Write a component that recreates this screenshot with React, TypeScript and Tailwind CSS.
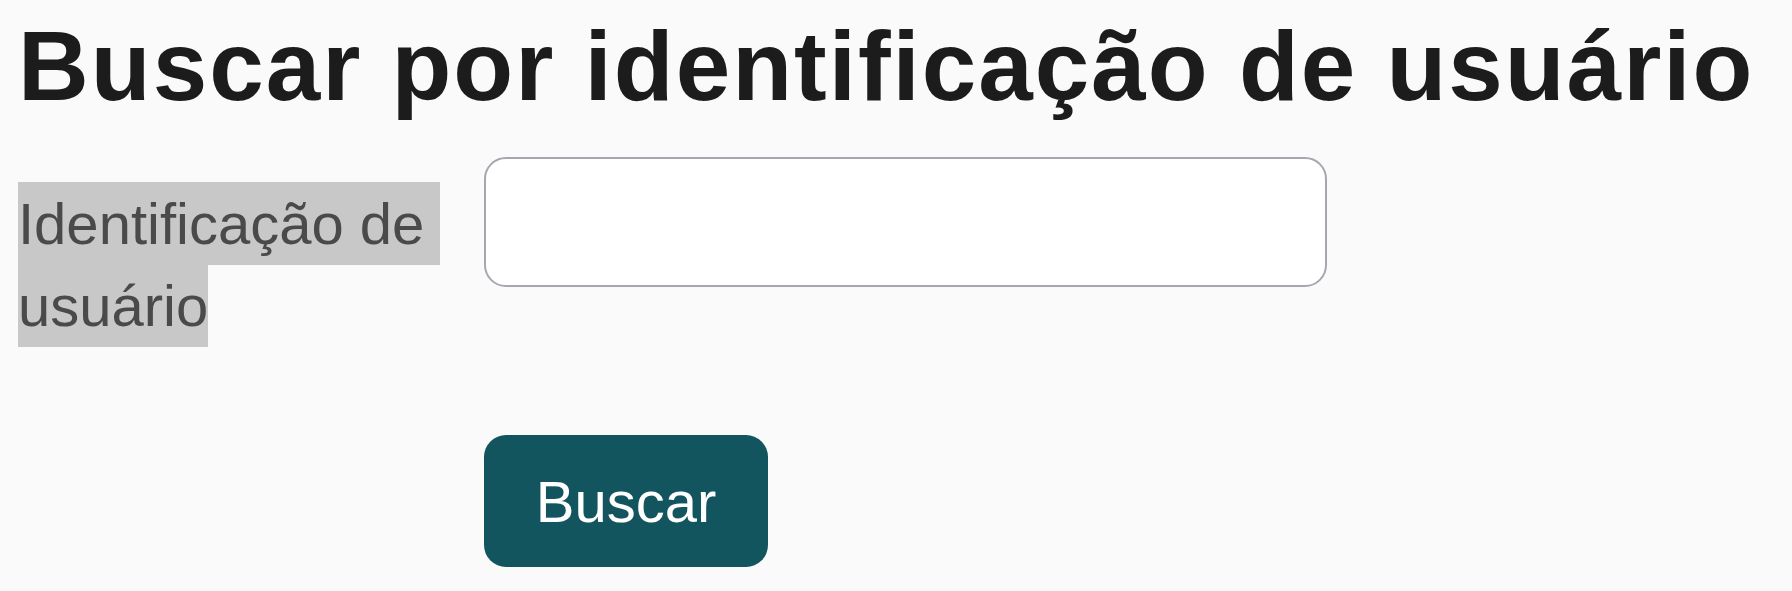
export default function App() {
  return (
    <div
      className="min-h-screen w-full bg-[#fafafa] pl-[18px] pt-[17px]"
      style={{ fontFamily: '"Liberation Sans", Arial, sans-serif' }}
    >
      <h1 className="text-[98px] leading-[98px] font-bold tracking-[2px] text-[#1c1c1c] whitespace-nowrap">
        Buscar por identificação de usuário
      </h1>

      <div className="mt-[42px] flex items-start">
        <label htmlFor="userId" className="mt-[26px] w-[466px] shrink-0 pr-[20px] text-[58px] leading-[82px] text-[#4a4a4a]">
          <span className="bg-[#c8c8c8] py-[9px] pr-[16px]">Identificação de</span>{" "}
          <span className="bg-[#c8c8c8] py-[9px]">usuário</span>
        </label>
        <input
          id="userId"
          type="text"
          className="h-[130px] w-[843px] rounded-[22px] border-2 border-[#a4a8ae] bg-white px-6 text-[56px] focus:outline-none"
        />
      </div>

      <button
        type="submit"
        className="ml-[466px] mt-[88px] h-[132px] w-[284px] rounded-[22px] bg-[#13555f] text-[58px] text-white"
      >
        Buscar
      </button>
    </div>
  );
}
